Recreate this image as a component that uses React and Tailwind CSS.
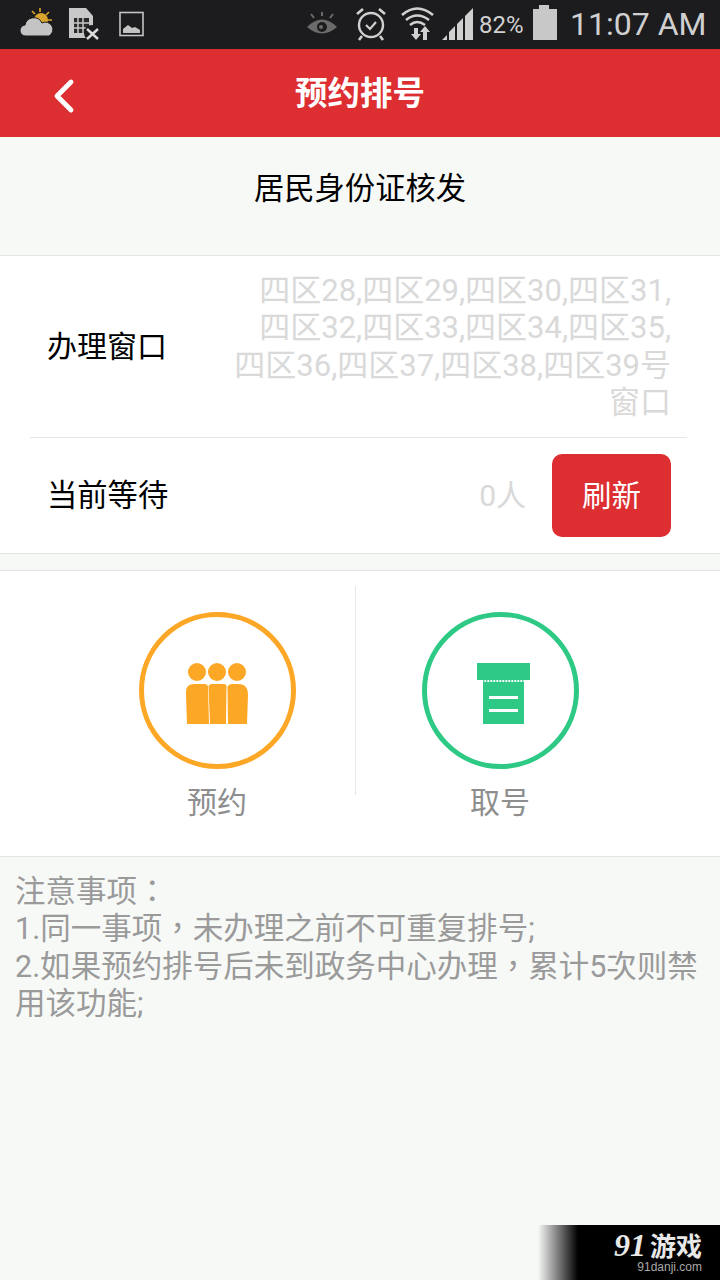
import { ChevronLeft } from "lucide-react";

const cjk = "font-['Roboto','Noto_Sans_CJK_SC',sans-serif]";

const StatusIcons = () => (
  <div className="flex items-center h-[49px] bg-[#1c1c1e] relative">
    <svg width="720" height="49" viewBox="0 0 720 49">
      {/* weather */}
      <circle cx="41" cy="20" r="7" fill="#d9a52e" />
      <path d="M40 8v4M32 11l3 3M49 12l-3 3M47 20h5" stroke="#d9a52e" strokeWidth="1.6" />
      <path d="M26 36a5.500 5.500 0 0 1-1-11 9 9 0 0 1 17-2 7 7 0 0 1 7 13z" fill="#c4c4c4" stroke="#1c1c1e" strokeWidth="1" />
      {/* sim x */}
      <path d="M69 8h17l7 8v22H69z" fill="#c8c8c8" />
      <path d="M74 18h15v15H74z" fill="#2a2a2a" />
      <path d="M78 18v15M83 18v15M74 23h15M74 28h15" stroke="#c8c8c8" strokeWidth="1.500" />
      <circle cx="92" cy="33" r="8" fill="#1c1c1e" />
      <path d="M87 29l11 10M98 29l-11 10" stroke="#dcdcdc" strokeWidth="2.400" />
      {/* picture */}
      <rect x="120" y="12.500" width="23" height="23" fill="none" stroke="#c4c4c4" strokeWidth="1.600" />
      <path d="M123 33v-4l5-4 4 3 3-1 5 3v3z" fill="#c4c4c4" />
      {/* eye */}
      <g stroke="#6b6b6b" strokeWidth="2" fill="none">
        <path d="M322 12v4M311 14l3 4M333 14l-3 4" />
      </g>
      <path d="M307 27q15-15 30 0-15 13-30 0z" fill="#6b6b6b" />
      <circle cx="322" cy="27" r="5" fill="#1c1c1e" />
      <circle cx="321" cy="27" r="2" fill="#6b6b6b" />
      {/* alarm */}
      <circle cx="371" cy="25" r="12" fill="none" stroke="#d0d0d0" strokeWidth="2.400" />
      <path d="M366 25l4 4 6-7" fill="none" stroke="#d0d0d0" strokeWidth="2.200" />
      <path d="M357 14l6-5M385 14l-6-5M362 36l-3 4M380 36l3 4" stroke="#d0d0d0" strokeWidth="2.600" />
      {/* wifi */}
      <path d="M402 15q15-13 31 0M406 20q11-9 23 0M410 25q7-6 15 0" fill="none" stroke="#d0d0d0" strokeWidth="2.600" />
      <path d="M414 28h4v6h3l-5 6-5-6h3zM423 40v-8h-3l5-6 5 6h-3v8z" fill="#d0d0d0" />
      {/* signal */}
      <path d="M442 40l5-5v5zM449 40v-8l6-6v14zM457 40V24l6-6v22zM465 40V16l8-8v32z" fill="#d0d0d0" />
      {/* battery */}
      <path d="M539 5h10v4h8v31h-24V9h6z" fill="#c8c8c8" />
    </svg>
    <span className="absolute left-[479px] top-[9px] text-[24px] leading-[32px] text-[#d0d0d0] font-['Roboto',sans-serif]">82%</span>
    <span className="absolute left-[570px] top-[5px] text-[32px] leading-[38px] text-[#d0d0d0] font-['Roboto',sans-serif]">11:07 AM</span>
  </div>
);

const PeopleIcon = () => (
  <svg width="64" height="62" viewBox="0 0 64 62" fill="#fda726">
    <circle cx="12" cy="9" r="9" />
    <circle cx="32" cy="9" r="9" />
    <circle cx="52" cy="9" r="9" />
    <path d="M1 32q-1-11 8-11h10q4 0 4 3l1 37H2z" />
    <path d="M23.500 24q0-3 4-3h11q3 0 3 2l-.5 38H25z" />
    <path d="M42.500 24q1-3 5-3h6q9.500 0 9.500 11l-1 29H43z" />
  </svg>
);

const TicketIcon = () => (
  <svg width="53" height="62" viewBox="0 0 53 62" fill="#2dc985">
    <rect x="0" y="0" width="53" height="17" />
    <path d="M6 18h41" stroke="#2dc985" strokeWidth="1.500" strokeDasharray="1.500 1.500" />
    <rect x="6" y="19" width="41" height="42" />
    <rect x="12" y="33" width="29" height="3" fill="#fff" />
    <rect x="12" y="46" width="29" height="3" fill="#fff" />
  </svg>
);

const Action = ({ label, ring, width, iconClass, children }) => (
  <div className={`${width} flex flex-col items-center`}>
    <div className={`w-[157px] h-[157px] rounded-full border-[5px] ${ring} ${iconClass} flex items-center justify-center`}>
      {children}
    </div>
    <span className="mt-[11px] text-[30px] leading-[46px] text-[#8e8e8e]">{label}</span>
  </div>
);

export default function App() {
  return (
    <div className={`relative w-[720px] h-[1280px] overflow-hidden bg-[#f7f9f7] ${cjk}`}>
      <StatusIcons />

      <div className="h-[88px] bg-[#dd2e32] flex items-center justify-center relative">
        <ChevronLeft className="absolute left-[36px] top-[19px] text-white" size={56} strokeWidth={2.100} />
        <h1 className="text-[32.500px] font-bold text-white leading-none pt-[2px]">预约排号</h1>
      </div>

      <div className="h-[119px] flex items-center justify-center pb-[14px] text-[30.300px] text-black border-b border-[#e6e6e6]">
        居民身份证核发
      </div>

      <div className="bg-white border-b border-[#e3e5e3] h-[298px] flex flex-col">
        <div className="h-[182px] ml-[30px] mr-[33px] border-b border-[#e6e6e6] flex items-center justify-between pl-[17px]">
          <span className="text-[30px] text-black shrink-0">办理窗口</span>
          <p className="w-[480px] pr-[16px] text-right text-[31px] leading-[37.500px] text-[#d9d9d9]">
            四区28,四区29,四区30,四区31,
            <br />
            四区32,四区33,四区34,四区35,
            <br />
            四区36,四区37,四区38,四区39号
            <br />
            窗口
          </p>
        </div>
        <div className="flex-1 flex items-center justify-between pl-[47px] pr-[49px]">
          <span className="text-[30.300px] text-black">当前等待</span>
          <div className="flex items-center gap-[26px]">
            <span className="text-[30px] text-[#d9d9d9]">0人</span>
            <button className="w-[119px] h-[83px] rounded-[10px] bg-[#dd2e32] text-white text-[29.500px] pt-[2px]">刷新</button>
          </div>
        </div>
      </div>

      <div className="h-[16px]" />

      <div className="bg-white border-y border-[#e3e5e3] h-[287px] flex pl-[79px] pt-[41px]">
        <Action label="预约" ring="border-[#fda726]" width="w-[276px]" iconClass="pt-[7px]">
          <PeopleIcon />
        </Action>
        <div className="w-px h-[209px] -mt-[26px] bg-[#e6e6e6] shrink-0" />
        <Action label="取号" ring="border-[#2dc985]" width="w-[288px]" iconClass="pt-[7px] pl-[6px]">
          <TicketIcon />
        </Action>
      </div>

      <p className="px-[15px] pt-[16px] text-[30.500px] leading-[37.400px] text-[#9a9a9a] font-['Roboto','Noto_Sans_CJK_TC',sans-serif]">
        注意事项：
        <br />
        1.同一事项，未办理之前不可重复排号;
        <br />
        2.如果预约排号后未到政务中心办理，累计5次则禁用该功能;
      </p>

      <div className="absolute right-0 bottom-0 w-[182px] h-[55px] bg-[linear-gradient(to_right,#f7f9f7_0%,#000_22%,#000_100%)] flex flex-col items-end pr-[18px] pt-[6px]">
        <div className="h-[28px] text-[26px] leading-[28px] font-bold text-[#e8e8e8] font-['Noto_Sans_CJK_SC',sans-serif] flex items-center">
          <span className="italic font-['Liberation_Serif',serif] text-[32px] leading-[28px] mr-[4px]">91</span>
          <span className="leading-[28px]">游戏</span>
        </div>
        <div className="text-[12px] leading-[16px] text-[#a8a8a8] font-['Liberation_Sans',sans-serif]">91danji.com</div>
      </div>
    </div>
  );
}
